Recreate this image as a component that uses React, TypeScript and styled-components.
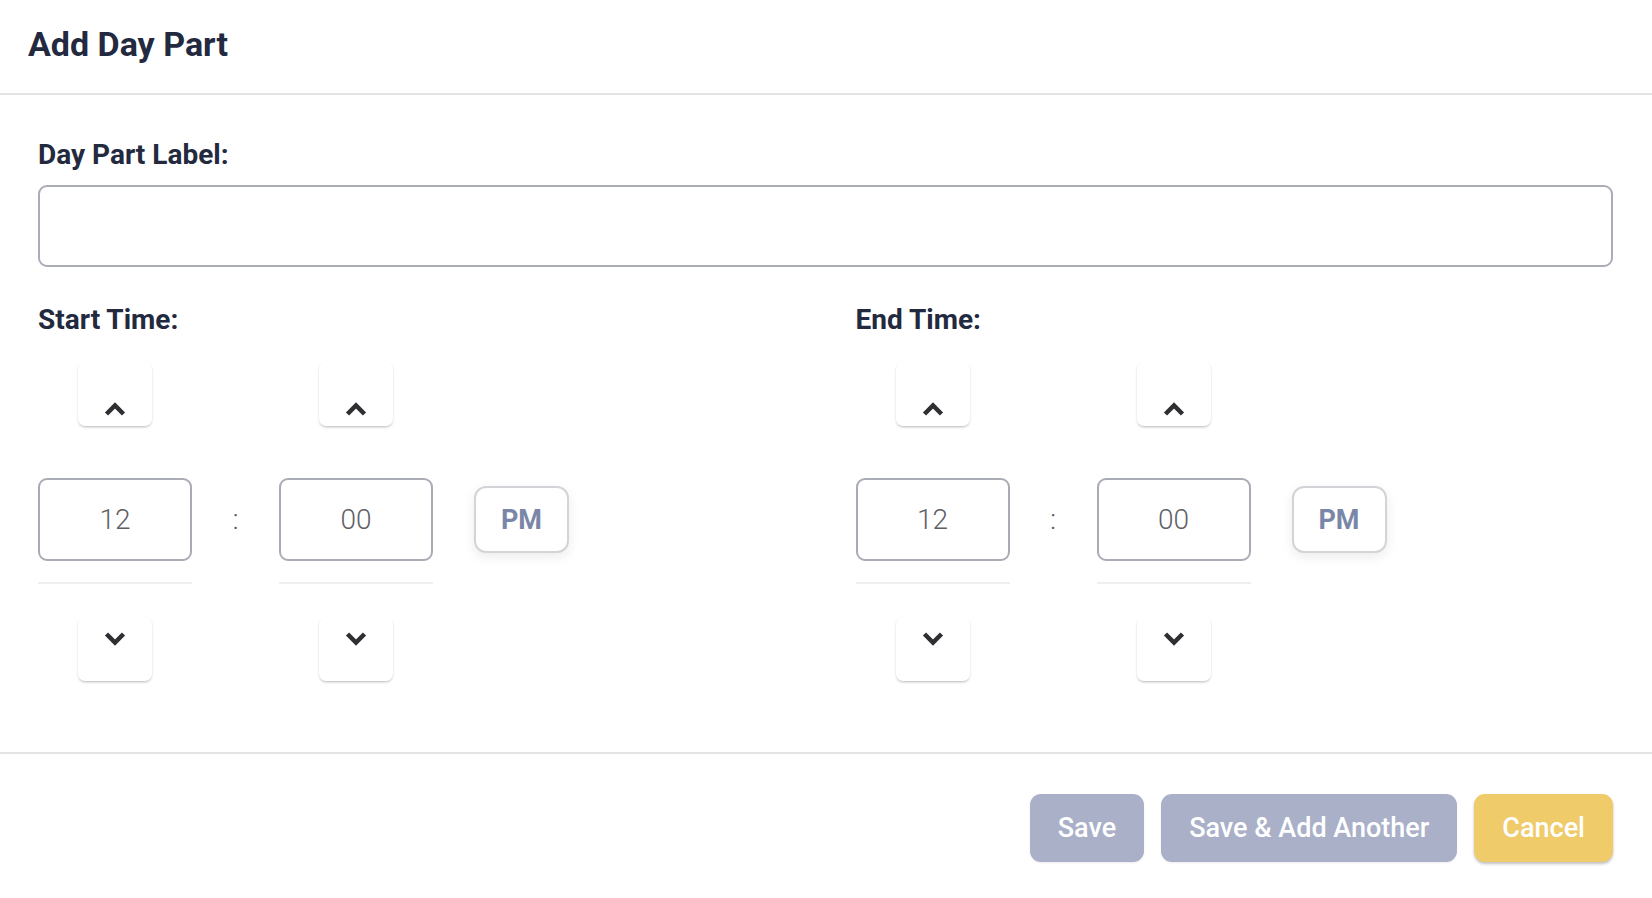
import React from "react";
import styled, { createGlobalStyle } from "styled-components";

const GlobalStyle = createGlobalStyle`
  * { box-sizing: border-box; }
  html, body { margin: 0; padding: 0; background: #ffffff; }
  body { font-family: Roboto, "Liberation Sans", Arial, sans-serif; }
`;

const Modal = styled.div`
  width: 1652px;
  height: 898px;
  background: #ffffff;
  display: flex;
  flex-direction: column;
`;

const Header = styled.header`
  height: 95px;
  padding: 24px 28px 0;
  border-bottom: 2px solid #e4e4e6;
`;

const Title = styled.h1`
  margin: 0;
  font-size: 34px;
  line-height: 40px;
  font-weight: 700;
  color: #232a40;
`;

const Body = styled.div`
  padding: 43px 39px 71px 38px;
`;

const Label = styled.div`
  font-size: 28px;
  line-height: 33px;
  font-weight: 700;
  color: #232a40;
`;

const Field = styled.div`
  display: flex;
  flex-direction: column;
  gap: 14px;
`;

const TextInput = styled.input`
  height: 82px;
  width: 100%;
  border: 2px solid #aaadb5;
  border-radius: 9px;
  background: #fff;
  font-family: Roboto, "Liberation Sans", sans-serif;
  font-size: 26px;
  padding: 0 16px;
  outline: none;
`;

const TimeGrid = styled.div`
  display: grid;
  grid-template-columns: 1fr 1fr;
  column-gap: 60px;
  margin-top: 36px;
`;

const TimeField = styled.div`
  display: flex;
  flex-direction: column;
  gap: 26px;
`;

const Picker = styled.div`
  display: flex;
  align-items: flex-start;
`;

const SpinColumn = styled.div`
  width: 154px;
  display: flex;
  flex-direction: column;
  align-items: center;
`;

const SpinButton = styled.button<{ $dir: "up" | "down" }>`
  width: 74px;
  height: 64px;
  border: none;
  border-radius: 7px;
  background: #ffffff;
  box-shadow: 0 2px 3px -1px rgba(0, 0, 0, 0.28), 1px 0 2px -1px rgba(0, 0, 0, 0.08),
    -1px 0 2px -1px rgba(0, 0, 0, 0.08);
  display: flex;
  justify-content: center;
  align-items: ${(p) => (p.$dir === "up" ? "flex-end" : "flex-start")};
  padding: ${(p) => (p.$dir === "up" ? "0 0 10px" : "15px 0 0")};
  margin-top: ${(p) => (p.$dir === "down" ? "33px" : "0")};
  cursor: pointer;
`;

const TimeInput = styled.input`
  margin-top: 52px;
  width: 154px;
  height: 83px;
  border: 2px solid #a9acb5;
  border-radius: 9px;
  background: #fff;
  text-align: center;
  font-family: Roboto, "Liberation Sans", sans-serif;
  font-weight: 300;
  font-size: 28px;
  color: #5f6066;
  outline: none;
  padding: 0;
`;

const Rule = styled.div`
  margin-top: 21px;
  width: 100%;
  height: 2px;
  background: #efeff1;
`;

const Colon = styled.div`
  width: 87px;
  height: 83px;
  margin-top: 116px;
  display: flex;
  align-items: center;
  justify-content: center;
  padding-top: 1px;
  font-size: 27px;
  font-weight: 300;
  color: #55565c;
`;

const Meridian = styled.button`
  margin-top: 124px;
  margin-left: 41px;
  width: 95px;
  height: 67px;
  border: 2px solid #d3d4d8;
  border-radius: 12px;
  background: #ffffff;
  box-shadow: 0 4px 12px rgba(0, 0, 0, 0.08);
  font-family: Roboto, "Liberation Sans", sans-serif;
  font-size: 27px;
  font-weight: 700;
  color: #7a86a7;
  padding: 0;
  cursor: pointer;
`;

const Footer = styled.footer`
  border-top: 2px solid #e4e4e6;
  padding: 40px 39px 36px;
  display: flex;
  justify-content: flex-end;
  gap: 17px;
`;

const ActionButton = styled.button<{ $variant: "primary" | "warning" }>`
  height: 68px;
  padding: 0 28px;
  border: none;
  border-radius: 11px;
  background: ${(p) => (p.$variant === "warning" ? "#f0cb6a" : "#a9b0c8")};
  box-shadow: ${(p) =>
    p.$variant === "warning"
      ? "0 2px 3px rgba(0,0,0,0.25)"
      : "0 1px 2px rgba(0,0,0,0.08)"};
  color: #ffffff;
  font-family: Roboto, "Liberation Sans", sans-serif;
  font-size: 27px;
  font-weight: 500;
  cursor: pointer;
`;

const Chevron = ({ dir }: { dir: "up" | "down" }) => (
  <svg width="22" height="14" viewBox="0 0 22 14" fill="none">
    <polyline
      points={dir === "up" ? "2.5,12 11,3.5 19.5,12" : "2.5,2 11,10.5 19.5,2"}
      stroke="#2e2f33"
      strokeWidth="4.5"
      strokeLinejoin="miter"
      fill="none"
    />
  </svg>
);

const Spinner = ({ value }: { value: string }) => (
  <SpinColumn>
    <SpinButton $dir="up" aria-label="Increment">
      <Chevron dir="up" />
    </SpinButton>
    <TimeInput defaultValue={value} />
    <Rule />
    <SpinButton $dir="down" aria-label="Decrement">
      <Chevron dir="down" />
    </SpinButton>
  </SpinColumn>
);

const TimePicker = ({ label }: { label: string }) => (
  <TimeField>
    <Label>{label}</Label>
    <Picker>
      <Spinner value="12" />
      <Colon>:</Colon>
      <Spinner value="00" />
      <Meridian>PM</Meridian>
    </Picker>
  </TimeField>
);

export default function App() {
  return (
    <>
      <GlobalStyle />
      <Modal>
        <Header>
          <Title>Add Day Part</Title>
        </Header>
        <Body>
          <Field>
            <Label>Day Part Label:</Label>
            <TextInput />
          </Field>
          <TimeGrid>
            <TimePicker label="Start Time:" />
            <TimePicker label="End Time:" />
          </TimeGrid>
        </Body>
        <Footer>
          <ActionButton $variant="primary">Save</ActionButton>
          <ActionButton $variant="primary">Save &amp; Add Another</ActionButton>
          <ActionButton $variant="warning">Cancel</ActionButton>
        </Footer>
      </Modal>
    </>
  );
}
